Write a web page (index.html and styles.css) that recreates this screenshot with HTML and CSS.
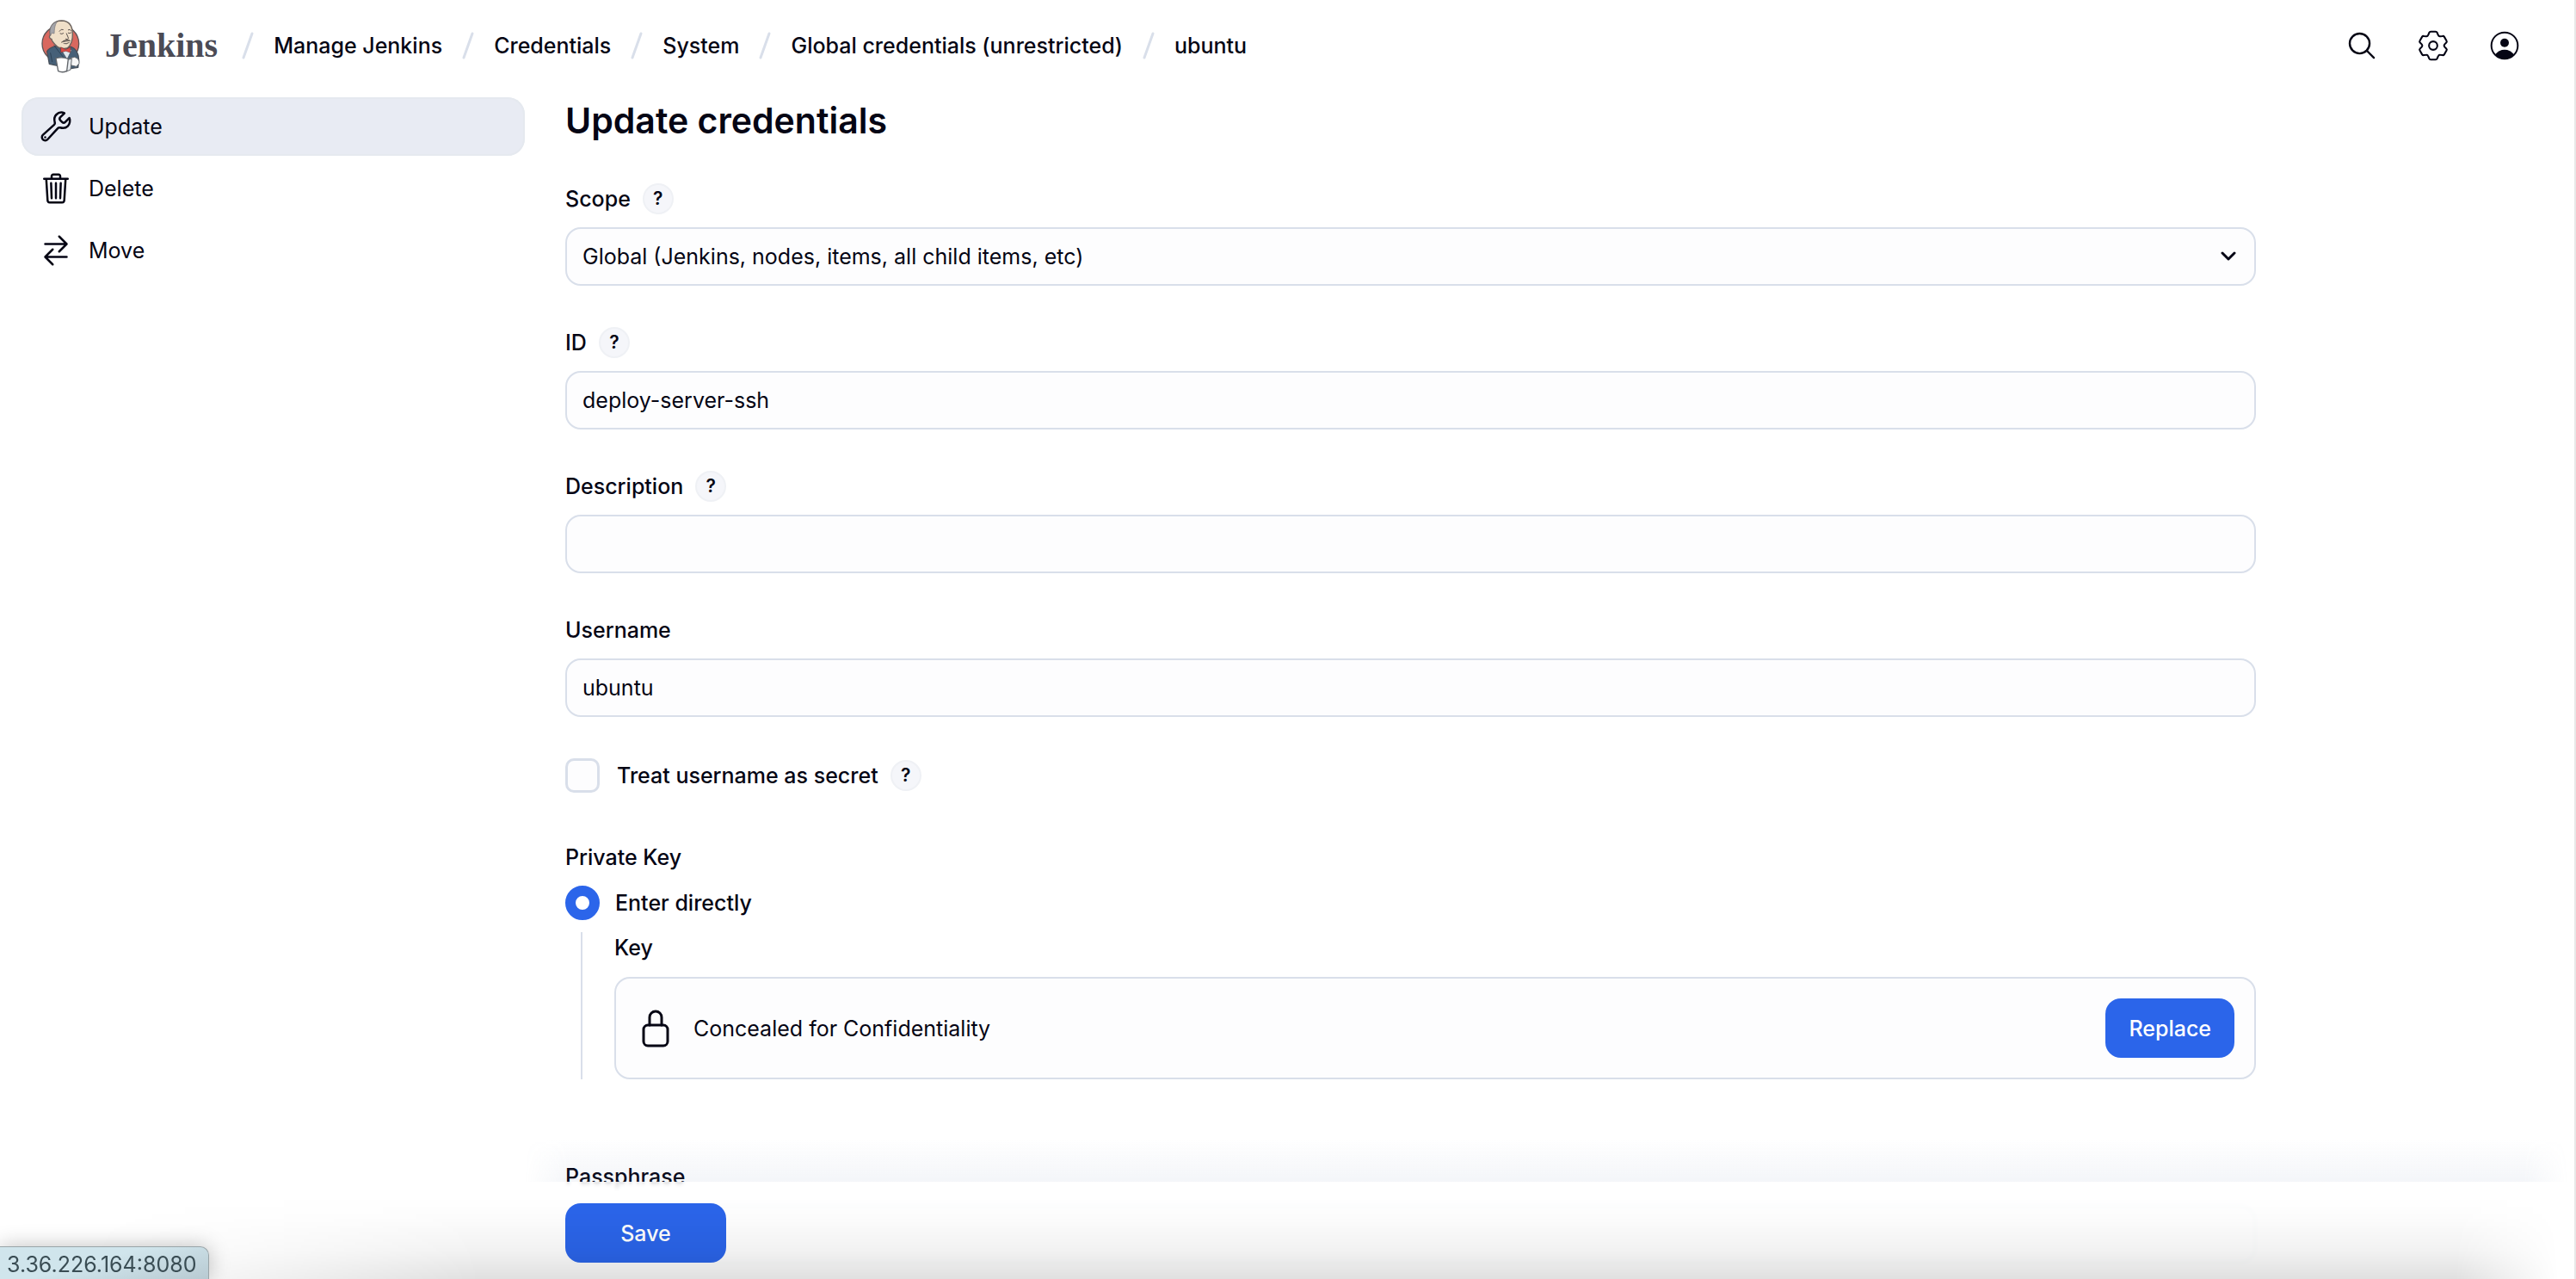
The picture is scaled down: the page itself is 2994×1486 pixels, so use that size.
FILE: index.html
```html
<!DOCTYPE html>
<html lang="en">
<head>
<meta charset="utf-8">
<meta name="viewport" content="width=device-width, initial-scale=1">
<title>Update credentials - Jenkins</title>
<link rel="stylesheet" href="styles.css">
</head>
<body>
<header class="header">
  <a class="brand" href="#">
    <svg class="brand-logo" viewBox="50 32 144 195" aria-hidden="true">
      <ellipse cx="123" cy="121" rx="64" ry="63" fill="#d9685f" stroke="#5b5455" stroke-width="4"/>
      <path d="M76 148 C80 138 92 134 104 130 L160 132 C176 138 186 152 187 178 L184 204 L158 208 L84 192 Z" fill="#466078" stroke="#48505a" stroke-width="4"/>
      <path d="M124 140 L146 176 L162 142 Z" fill="#dfe8ee" stroke="#48505a" stroke-width="2"/>
      <path d="M87 92 C82 60 100 41 127 41 C154 42 165 62 165 88 C166 106 160 128 146 137 C128 142 112 134 104 124 C96 116 92 110 92 105 C84 104 82 96 87 92 Z" fill="#f0dfc8" stroke="#6b625c" stroke-width="4"/>
      <path d="M88 92 C82 68 92 50 112 44 C102 56 102 72 101 86 L94 84 Z" fill="#a5a5aa" stroke="#77757a" stroke-width="2"/>
      <path d="M119 78 q6-10 13-6 M150 73 q6-4 10 3 M122 86 q6 4 11-1 M150 84 q6 3 10-1 M144 86 L151 103 Q147 108 141 105" fill="none" stroke="#5d5450" stroke-width="3"/>
      <path d="M127 116 Q134 108 142 109 Q150 106 157 111 Q144 112 127 116 Z M134 121 Q144 125 154 117" fill="#5d5450" stroke="#5d5450" stroke-width="2"/>
      <path d="M125 134 L141 142 L158 133 L157 152 L142 147 L125 151 Z" fill="#dd4a45" stroke="#7d3735" stroke-width="2"/>
      <path d="M101 128 L118 150 L144 182 M88 154 L94 184" fill="none" stroke="#2e4256" stroke-width="3"/>
      <path d="M156 172 L172 168 Q190 174 188 190 L178 201 L158 196 Z" fill="#f7f7f7" stroke="#62666b" stroke-width="3"/>
      <path d="M148 177 L162 174 L158 212 L144 218 Z" fill="#e7ebee" stroke="#62666b" stroke-width="3"/>
      <path d="M107 172 Q128 166 150 174 L145 216 Q130 224 115 217 Z" fill="#fff" stroke="#62666b" stroke-width="4"/>
    </svg>
    <span class="brand-name">Jenkins</span>
  </a>
  <nav class="crumbs" aria-label="Breadcrumb">
    <svg class="slash" viewBox="0 0 14 32" aria-hidden="true"><path d="M12 2 2 30"/></svg>
    <a href="#">Manage Jenkins</a>
    <svg class="slash" viewBox="0 0 14 32" aria-hidden="true"><path d="M12 2 2 30"/></svg>
    <a href="#">Credentials</a>
    <svg class="slash" viewBox="0 0 14 32" aria-hidden="true"><path d="M12 2 2 30"/></svg>
    <a href="#">System</a>
    <svg class="slash" viewBox="0 0 14 32" aria-hidden="true"><path d="M12 2 2 30"/></svg>
    <a href="#">Global credentials (unrestricted)</a>
    <svg class="slash" viewBox="0 0 14 32" aria-hidden="true"><path d="M12 2 2 30"/></svg>
    <a href="#" aria-current="page">ubuntu</a>
  </nav>
  <div class="actions">
    <button class="icon-button" type="button" aria-label="Search">
      <svg viewBox="0 0 512 512"><circle cx="221" cy="221" r="164"/><path d="M338 338 456 456"/></svg>
    </button>
    <button class="icon-button" type="button" aria-label="Settings">
      <svg viewBox="-52 -52 104 104" class="gear"><path d="M-8-47H8Q12-47 13-44L17-35Q19-30 24-31L31-32Q35-33 37-30L45-16Q47-13 44-10L38-4Q35 0 38 4L44 10Q47 13 45 16L37 30Q35 33 31 32L24 31Q19 30 17 35L13 44Q12 47 8 47H-8Q-12 47-13 44L-17 35Q-19 30-24 31L-31 32Q-35 33-37 30L-45 16Q-47 13-44 10L-38 4Q-35 0-38-4L-44-10Q-47-13-45-16L-37-30Q-35-33-31-32L-24-31Q-19-30-17-35L-13-44Q-12-47-8-47Z"/><circle r="14"/></svg>
    </button>
    <button class="icon-button" type="button" aria-label="Account">
      <svg viewBox="-54 -54 108 108" class="gear"><circle r="46"/><circle class="solid" cy="-10" r="15"/><path class="solid" d="M-33 31Q-20 14 0 14T33 31Q18 47 0 47T-33 31Z"/></svg>
    </button>
  </div>
</header>

<div class="page">
  <nav class="tasks" aria-label="Tasks">
    <a class="task task-active" href="#">
      <svg viewBox="0 0 512 512" aria-hidden="true"><path d="M393.87 190a32.1 32.1 0 01-45.25 0l-26.57-26.57a32.09 32.09 0 010-45.26L382.19 58a1 1 0 00-.3-1.64c-38.82-16.64-89.15-8.16-121.11 23.57-30.58 30.35-32.32 76-21.12 115.84a31.93 31.93 0 01-9.06 32.08L64 380a48.17 48.17 0 1068 68l153.86-167a31.93 31.93 0 0131.6-9.13c39.54 10.59 84.54 8.6 114.72-21.19 32.49-32 39.5-88.56 23.75-120.93a1 1 0 00-1.6-.26z"/><circle class="dot" cx="96" cy="416" r="16"/></svg>
      Update
    </a>
    <a class="task" href="#">
      <svg viewBox="0 0 512 512" aria-hidden="true"><path d="M112 112l20 320c.95 18.49 14.4 32 32 32h184c17.67 0 30.87-13.51 32-32l20-320M80 112h352M192 112V72a23.93 23.93 0 0124-24h80a23.93 23.93 0 0124 24v40M256 176v224M184 176l8 224M328 176l-8 224"/></svg>
      Delete
    </a>
    <a class="task" href="#">
      <svg viewBox="0 0 512 512" aria-hidden="true"><path d="M304 48l112 112-112 112M398.87 160H96M208 464L96 352l112-112M114 352h302"/></svg>
      Move
    </a>
  </nav>

  <main class="main">
    <form class="form" id="credentials">
      <h1>Update credentials</h1>

      <div class="field">
        <div class="label-row"><label for="scope">Scope</label><button class="help" type="button" aria-label="Help for Scope">?</button></div>
        <div class="select">
          <select id="scope"><option>Global (Jenkins, nodes, items, all child items, etc)</option></select>
          <svg viewBox="0 0 18 12" aria-hidden="true"><path d="M2 2l7 7 7-7"/></svg>
        </div>
      </div>

      <div class="field">
        <div class="label-row"><label for="cred-id">ID</label><button class="help" type="button" aria-label="Help for ID">?</button></div>
        <input class="text" id="cred-id" type="text" value="deploy-server-ssh">
      </div>

      <div class="field">
        <div class="label-row"><label for="description">Description</label><button class="help" type="button" aria-label="Help for Description">?</button></div>
        <input class="text" id="description" type="text">
      </div>

      <div class="field">
        <div class="label-row"><label for="username">Username</label></div>
        <input class="text" id="username" type="text" value="ubuntu">
      </div>

      <div class="choice secret">
        <input class="check" id="secret" type="checkbox">
        <div class="choice-label">
          <label for="secret">Treat username as secret</label>
          <button class="help" type="button" aria-label="Help for Treat username as secret">?</button>
        </div>
      </div>

      <fieldset class="group">
        <legend>Private Key</legend>
        <div class="choice">
          <input class="radio" id="direct" type="radio" name="source" checked>
          <label for="direct">Enter directly</label>
        </div>
        <div class="nested">
          <span class="nested-label">Key</span>
          <div class="concealed">
            <svg viewBox="0 0 32 44" aria-hidden="true"><path d="M9 18V9a7 7 0 0114 0v9"/><rect x="2" y="18" width="28" height="24" rx="5"/></svg>
            <span>Concealed for Confidentiality</span>
            <button class="button" type="button">Replace</button>
          </div>
        </div>
      </fieldset>

      <div class="field">
        <div class="label-row"><label for="passphrase">Passphrase</label></div>
        <input class="text" id="passphrase" type="password">
      </div>
    </form>
    <div class="save-bar"><button class="button button-save" type="submit" form="credentials">Save</button></div>
  </main>
</div>

<div class="edge-shade"></div>
<div class="link-status">3.36.226.164:8080</div>
</body>
</html>
```
FILE: styles.css
```css
* { box-sizing: border-box; }

:root {
  --text: #050514;
  --line: #d9dfea;
  --field: #fdfdfe;
  --accent: #2b65ea;
  --medium: 500;
}

body {
  margin: 0;
  height: 100vh;
  overflow: hidden;
  display: flex;
  flex-direction: column;
  border-right: 2px solid #e8e8e8;
  background: #fff;
  color: var(--text);
  font: 400 25px/36px Inter, "Liberation Sans", sans-serif;
}

a { color: inherit; text-decoration: none; }
button, input, select { font: inherit; color: inherit; }

svg {
  fill: none;
  stroke: currentColor;
  stroke-linecap: round;
  stroke-linejoin: round;
}

/* Header */
.header {
  display: flex;
  align-items: center;
  flex: none;
  height: 106px;
  padding: 0 63px 0 46px;
}
.brand { display: flex; align-items: center; gap: 28px; }
.brand-logo { width: 48px; height: 65px; }
.brand-name {
  color: #4b4b55;
  font: 700 40px/48px "Liberation Serif", serif;
}
.crumbs {
  display: flex;
  align-items: center;
  gap: 23px;
  margin-left: 28px;
  font-weight: var(--medium);
}
.slash { width: 14px; height: 32px; stroke: var(--line); stroke-width: 3; }
.actions { display: flex; gap: 47px; margin-left: auto; }
.icon-button {
  display: flex;
  padding: 0;
  border: 0;
  background: none;
}
.icon-button svg { width: 36px; height: 36px; stroke-width: 34; }
.icon-button .gear { stroke-width: 6; }
.icon-button .solid { fill: currentColor; stroke: none; }

/* Layout */
.page {
  display: grid;
  grid-template-columns: 610px minmax(0, 1fr);
  flex: 1;
  min-height: 0;
}
.main { overflow-y: auto; scrollbar-width: none; }
.form { padding: 7px 370px 48px 47px; }

/* Side tasks */
.tasks {
  display: flex;
  flex-direction: column;
  gap: 4px;
  padding: 7px 0 0 25px;
}
.task {
  display: flex;
  align-items: center;
  gap: 18px;
  height: 68px;
  padding: 0 20px;
  border-radius: 20px;
}
.task svg { width: 40px; height: 40px; stroke-width: 32; }
.task .dot { fill: currentColor; stroke: none; }
.task-active { background: #e8ebf3; box-shadow: inset 0 0 0 2px #e5e9ef; }

/* Form */
h1 {
  margin: 0 0 46px;
  font-size: 41px;
  line-height: 54px;
  font-weight: 600;
}
.field { margin-bottom: 48px; }
.label-row {
  display: flex;
  align-items: center;
  gap: 14px;
  min-height: 36px;
  margin-bottom: 15px;
  font-weight: var(--medium);
}
.help {
  width: 36px;
  height: 36px;
  padding: 0;
  border: 2px solid #eff1f5;
  border-radius: 50%;
  background: #f5f6fa;
  font-size: 21px;
  line-height: 30px;
  font-weight: 600;
}
.text, .select select {
  display: block;
  width: 100%;
  height: 68px;
  padding: 0 18px;
  border: 2px solid var(--line);
  border-radius: 18px;
  background: var(--field);
  appearance: none;
}
.select { display: grid; align-items: center; }
.select select, .select svg { grid-area: 1 / 1; }
.select svg {
  justify-self: end;
  width: 18px;
  height: 12px;
  margin-right: 23px;
  stroke-width: 3;
  pointer-events: none;
}
.choice {
  display: flex;
  align-items: center;
  gap: 18px;
  font-weight: var(--medium);
}
.choice-label { display: flex; align-items: center; gap: 14px; }
.secret { gap: 20px; margin-bottom: 57px; }
.check, .radio {
  width: 40px;
  height: 40px;
  margin: 0;
  appearance: none;
}
.check {
  border: 3px solid var(--line);
  border-radius: 10px;
  background: var(--field);
}
.radio {
  border: 12px solid var(--accent);
  border-radius: 50%;
  background: #fff;
}
.group { margin: 0 0 95px; padding: 0; border: 0; }
.group legend {
  padding: 0;
  margin-bottom: 15px;
  font-weight: var(--medium);
}
.nested {
  margin: 14px 0 0 18px;
  padding-left: 37px;
  border-left: 2px solid var(--line);
}
.nested-label { display: block; margin-bottom: 16px; font-weight: var(--medium); }
.concealed {
  display: flex;
  align-items: center;
  height: 119px;
  padding: 0 23px 0 30px;
  border: 2px solid var(--line);
  border-radius: 18px;
  background: var(--field);
}
.concealed svg { width: 32px; height: 44px; margin-right: 28px; stroke-width: 3; }
.concealed .button { margin-left: auto; }
.button {
  height: 69px;
  padding: 0 27px;
  border: 0;
  border-radius: 18px;
  background: var(--accent);
  color: #fff;
  font-weight: var(--medium);
}
.button-save { width: 187px; }

/* Save bar pinned under the scrolling form */
.save-bar {
  position: sticky;
  bottom: 0;
  margin-right: 8px;
  padding: 25px 47px 19px;
  background: rgb(255 255 255 / 85%);
  backdrop-filter: blur(2px);
}
.save-bar::before {
  content: "";
  position: absolute;
  right: 0;
  bottom: 100%;
  left: 0;
  height: 50px;
  background: linear-gradient(to top, rgb(110 135 175 / 8%), transparent);
  mask-image: linear-gradient(to right, transparent, #000 50px calc(100% - 50px), transparent);
}

/* Soft shade along the bottom of the window */
.edge-shade {
  position: fixed;
  right: 0;
  bottom: 0;
  left: 0;
  height: 96px;
  background: linear-gradient(to top, rgb(0 0 0 / 12%), rgb(0 0 0 / 5%) 35%, rgb(0 0 0 / 1%) 75%, transparent);
  mask-image: linear-gradient(to right, transparent 100px, #000 560px calc(100% - 140px), transparent calc(100% - 20px));
  pointer-events: none;
}
.link-status {
  position: fixed;
  bottom: 0;
  left: 0;
  height: 38px;
  padding: 2px 14px 0 8px;
  border: 1px solid #9aa5a8;
  border-width: 1px 1px 0 0;
  border-radius: 0 10px 0 0;
  background: linear-gradient(165deg, #d0e5ec 45%, #b8cad2);
  box-shadow: 0 0 24px rgb(0 0 0 / 25%);
  color: #3a4d54;
}
```
